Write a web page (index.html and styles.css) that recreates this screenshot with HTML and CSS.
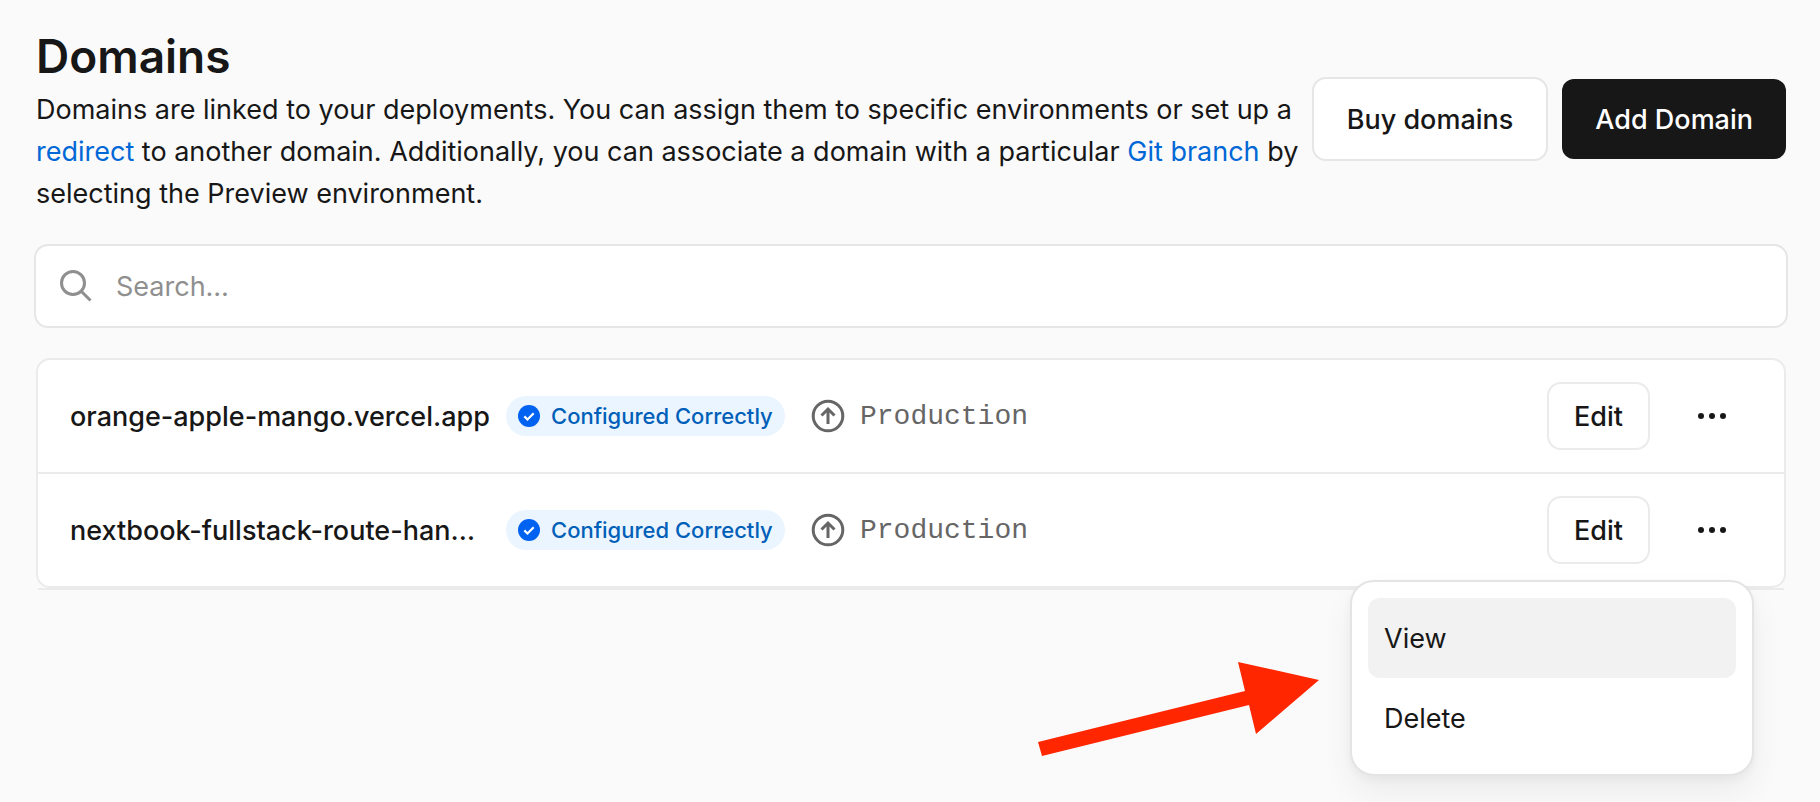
FILE: index.html
```html
<!DOCTYPE html>
<html lang="en">
<head>
  <meta charset="utf-8">
  <title>Domains</title>
  <link rel="stylesheet" href="styles.css">
</head>
<body>
  <main class="page">
    <header class="header">
      <div class="intro">
        <h1>Domains</h1>
        <p>Domains are linked to your deployments. You can assign them to specific environments or set up a <a href="#redirect">redirect</a> to another domain. Additionally, you can associate a domain with a particular <a href="#branch">Git branch</a> by selecting the Preview environment.</p>
      </div>
      <div class="actions">
        <button type="button" class="button">Buy domains</button>
        <button type="button" class="button primary">Add Domain</button>
      </div>
    </header>

    <label class="search">
      <svg width="32" height="32" viewBox="0 0 32 32" fill="none" stroke="#8f8f8f" stroke-width="3" aria-hidden="true">
        <circle cx="13" cy="13" r="11.5"/>
        <path d="M21.5 21.5l9 9"/>
      </svg>
      <input type="search" placeholder="Search…" aria-label="Search domains">
    </label>

    <section class="list">
      <ul class="domains">
        <li class="row">
          <div class="domain">
            <span class="name">orange-apple-mango.vercel.app</span>
            <span class="badge">
              <svg width="22" height="22" viewBox="0 0 22 22" aria-hidden="true">
                <circle cx="11" cy="11" r="11" fill="#0062f0"/>
                <path d="M6.3 11.4l3.2 3.1 6.2-6.2" fill="none" stroke="#fff" stroke-width="2.2"/>
              </svg>
              Configured Correctly
            </span>
          </div>
          <div class="environment">
            <svg width="34" height="34" viewBox="0 0 34 34" fill="none" stroke="#666" stroke-width="3" aria-hidden="true">
              <circle cx="17" cy="17" r="14.8"/>
              <path d="M17 25V10.5M10.5 16.5l6.5-6.5 6.5 6.5"/>
            </svg>
            Production
          </div>
          <div class="row-actions">
            <button type="button" class="button small">Edit</button>
            <button type="button" class="more" aria-label="More options">
              <svg width="32" height="8" viewBox="0 0 32 8" fill="#171717" aria-hidden="true">
                <circle cx="5" cy="4" r="3"/><circle cx="16" cy="4" r="3"/><circle cx="27" cy="4" r="3"/>
              </svg>
            </button>
          </div>
        </li>
        <li class="row">
          <div class="domain">
            <span class="name">nextbook-fullstack-route-han…</span>
            <span class="badge">
              <svg width="22" height="22" viewBox="0 0 22 22" aria-hidden="true">
                <circle cx="11" cy="11" r="11" fill="#0062f0"/>
                <path d="M6.3 11.4l3.2 3.1 6.2-6.2" fill="none" stroke="#fff" stroke-width="2.2"/>
              </svg>
              Configured Correctly
            </span>
          </div>
          <div class="environment">
            <svg width="34" height="34" viewBox="0 0 34 34" fill="none" stroke="#666" stroke-width="3" aria-hidden="true">
              <circle cx="17" cy="17" r="14.8"/>
              <path d="M17 25V10.5M10.5 16.5l6.5-6.5 6.5 6.5"/>
            </svg>
            Production
          </div>
          <div class="row-actions">
            <button type="button" class="button small">Edit</button>
            <button type="button" class="more" aria-label="More options" aria-expanded="true">
              <svg width="32" height="8" viewBox="0 0 32 8" fill="#171717" aria-hidden="true">
                <circle cx="5" cy="4" r="3"/><circle cx="16" cy="4" r="3"/><circle cx="27" cy="4" r="3"/>
              </svg>
            </button>
            <div class="menu" role="menu">
              <button type="button" role="menuitem" class="active">View</button>
              <button type="button" role="menuitem">Delete</button>
            </div>
            <svg class="arrow" width="282" height="96" viewBox="0 0 282 96" fill="#ff2600" aria-hidden="true">
              <path d="M0 80L207 29 200 0 281 18 218 72 211 43 4 94z"/>
            </svg>
          </div>
        </li>
      </ul>
    </section>
  </main>
</body>
</html>
```
FILE: styles.css
```css
* {
  box-sizing: border-box;
}
body {
  margin: 0;
  min-height: 100vh;
  background-color: #fafafa;
  color: #171717;
  font-family: Inter, sans-serif;
  font-size: 27px;
}
button,
input {
  font: inherit;
  color: inherit;
}
.page {
  padding: 23px 34px 0 36px;
}
.header {
  display: flex;
  align-items: center;
  gap: 10px;
}
.intro {
  flex: 1;
}
h1 {
  margin: 0;
  font-size: 46px;
  font-weight: 600;
  line-height: 66px;
}
p {
  margin: 0;
  line-height: 42px;
}
a {
  color: #0068d6;
  text-decoration: none;
}
.actions {
  display: flex;
  align-items: center;
  gap: 14px;
}
.button {
  height: 84px;
  padding: 0 33px;
  background-color: #fff;
  border: 2px solid #e6e6e6;
  border-radius: 14px;
  font-weight: 500;
  white-space: nowrap;
}
.primary {
  height: 80px;
  background-color: #171717;
  border: 0;
  border-radius: 12px;
  color: #fff;
}
.small {
  height: 68px;
  padding: 0 25px;
  border-color: #ebebeb;
}
.search {
  display: flex;
  align-items: center;
  gap: 24px;
  height: 84px;
  margin: 29px -2px 0;
  padding: 0 24px;
  background-color: #fff;
  border: 2px solid #e6e6e6;
  border-radius: 14px;
}
.search input {
  flex: 1;
  padding: 0;
  background: none;
  border: 0;
  outline: 0;
}
.search input::placeholder {
  color: #8f8f8f;
}
.list {
  margin-top: 30px;
}
/* hairline under the list, inset from the rounded corners */
.list::after {
  content: "";
  display: block;
  height: 2px;
  margin: 0 2px;
  background-color: #ebebeb;
}
.domains {
  margin: 0;
  padding: 0;
  list-style: none;
  background-color: #fff;
  border: 2px solid #ebebeb;
  border-radius: 14px;
}
.row {
  display: grid;
  grid-template-columns: 741px 1fr auto;
  align-items: center;
  box-sizing: content-box;
  height: 112px;
  padding: 0 32px;
}
.row + .row {
  border-top: 2px solid #ebebeb;
}
.domain {
  display: flex;
  align-items: center;
  gap: 16px;
}
.name {
  min-width: 420px;
  font-weight: 500;
  white-space: nowrap;
}
.badge {
  display: flex;
  align-items: center;
  gap: 11px;
  height: 40px;
  padding: 0 12px;
  background-color: #ebf5ff;
  border-radius: 20px;
  color: #005fb8;
  font-size: 22px;
  font-weight: 500;
  white-space: nowrap;
}
.environment {
  display: flex;
  align-items: center;
  gap: 15px;
  color: #666;
  font-family: "Liberation Mono", monospace;
  font-size: 28px;
}
.row-actions {
  position: relative;
  display: flex;
  align-items: center;
  gap: 22px;
}
.more {
  width: 80px;
  height: 68px;
  padding: 0;
  background: none;
  border: 0;
}
.more svg {
  display: block;
  margin: auto;
}
.menu {
  position: absolute;
  top: 84px;
  right: -2px;
  z-index: 1;
  width: 404px;
  padding: 16px;
  background-color: #fff;
  border: 2px solid #e4e4e4;
  border-radius: 24px;
  box-shadow: 0 4px 8px rgba(0, 0, 0, 0.04), 0 16px 32px rgba(0, 0, 0, 0.06);
}
.menu button {
  display: block;
  width: 100%;
  height: 80px;
  padding: 0 16px;
  background: none;
  border: 0;
  border-radius: 12px;
  text-align: left;
}
.menu .active {
  background-color: #f2f2f2;
}
.arrow {
  position: absolute;
  top: 166px;
  right: 432px;
}
```
